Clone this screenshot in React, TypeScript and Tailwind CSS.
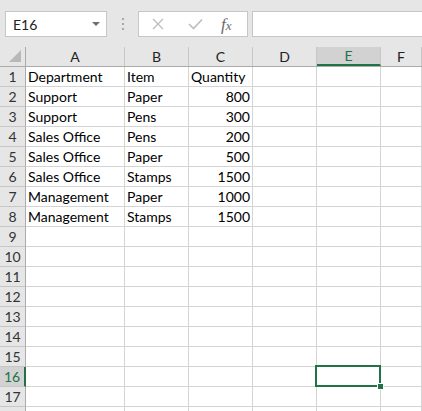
import React from 'react';

const cols = [
  { key: 'A', w: 'w-[99px]' },
  { key: 'B', w: 'w-[64px]' },
  { key: 'C', w: 'w-[64px]' },
  { key: 'D', w: 'w-[64px]' },
  { key: 'E', w: 'w-[64px]' },
  { key: 'F', w: 'flex-1' },
];

const data: (string | number)[][] = [
  ['Department', 'Item', 'Quantity'],
  ['Support', 'Paper', 800],
  ['Support', 'Pens', 300],
  ['Sales Office', 'Pens', 200],
  ['Sales Office', 'Paper', 500],
  ['Sales Office', 'Stamps', 1500],
  ['Management', 'Paper', 1000],
  ['Management', 'Stamps', 1500],
];

function FormulaBar() {
  return (
    <div className="h-[47px] flex items-start pt-[11px] pl-[5px] bg-[#e6e6e6]">
      <div className="w-[102px] h-[26px] bg-white border border-[#c6c6c6] flex items-center pl-[7px] pr-[6px]">
        <span className="flex-1 text-[14px] text-[#222]">E16</span>
        <svg width="8" height="5" viewBox="0 0 8 5">
          <path d="M0 0 L8 0 L4 4 Z" fill="#6f6f6f" />
        </svg>
      </div>
      <div className="w-[31px] h-[26px] flex flex-col items-center justify-center gap-[3px]">
        <div className="w-[2px] h-[2px] bg-[#a8a8a8]" />
        <div className="w-[2px] h-[2px] bg-[#a8a8a8]" />
        <div className="w-[2px] h-[2px] bg-[#a8a8a8]" />
      </div>
      <div className="w-[110px] h-[26px] bg-white border border-[#c6c6c6] flex items-center">
        <svg className="ml-[13px]" width="12" height="12" viewBox="0 0 12 12">
          <path d="M1 1 L11 11 M11 1 L1 11" stroke="#bdbdbd" strokeWidth="1.3" />
        </svg>
        <svg className="ml-[24px]" width="15" height="12" viewBox="0 0 15 12">
          <path d="M1 6 L5.5 10.5 L14 1.5" stroke="#bdbdbd" strokeWidth="1.6" fill="none" />
        </svg>
        <span className="ml-[18px] text-[17px] leading-none italic text-[#6a6a6a] font-['Liberation_Serif',serif]">
          f<span className="text-[13px]">x</span>
        </span>
      </div>
      <div className="ml-[4px] flex-1 h-[26px] bg-white border border-[#c6c6c6] border-r-0" />
    </div>
  );
}

function HeaderRow() {
  return (
    <div className="flex h-[20px] bg-[#e6e6e6] border-b border-[#ababab]">
      <div className="w-[26px] h-full border-r border-[#ababab] flex items-end justify-end pr-[4px] pb-[4px]">
        <svg width="12" height="12" viewBox="0 0 12 12">
          <path d="M12 0 L12 12 L0 12 Z" fill="#b8b8b8" />
        </svg>
      </div>
      {cols.map((c) => {
        const sel = c.key === 'E';
        return (
          <div
            key={c.key}
            className={
              c.w +
              ' h-full border-r border-[#c6c6c6] flex items-center justify-center text-[14px] ' +
              (sel ? 'bg-[#d2d2d2] text-[#217346] border-b-2 border-b-[#217346]' : 'text-[#222]')
            }
          >
            {c.key}
          </div>
        );
      })}
    </div>
  );
}

function Row({ n }: { n: number }) {
  const vals = data[n - 1] ?? [];
  const sel = n === 16;
  return (
    <div className="flex h-[20px]">
      <div
        className={
          'w-[26px] h-full border-b border-[#c6c6c6] flex items-end justify-center pb-[1px] text-[14px] leading-[16px] ' +
          (sel
            ? 'bg-[#d2d2d2] text-[#217346] border-r-2 border-r-[#217346]'
            : 'bg-[#e6e6e6] text-[#333] border-r border-r-[#ababab]')
        }
      >
        {n}
      </div>
      {cols.map((c, i) => {
        const v = vals[i];
        const num = typeof v === 'number';
        return (
          <div
            key={c.key}
            className={
              c.w +
              ' h-full border-r border-b border-[#d4d4d4] flex items-end pb-[1px] px-[2px] text-[14px] leading-[16px] text-black whitespace-nowrap ' +
              (num ? 'justify-end' : 'justify-start')
            }
          >
            {v !== undefined ? String(v) : ''}
          </div>
        );
      })}
    </div>
  );
}

export default function App() {
  const rows = Array.from({ length: 18 }, (_, i) => i + 1);
  return (
    <div className="w-[422px] h-[411px] overflow-hidden bg-white font-['Lato','Liberation_Sans',sans-serif] relative">
      <FormulaBar />
      <HeaderRow />
      <div className="flex flex-col">
        {rows.map((n) => (
          <Row key={n} n={n} />
        ))}
      </div>
      {/* active cell E16 */}
      <div className="absolute left-[315px] top-[365px] w-[66px] h-[22px] border-2 border-[#217346]" />
      <div className="absolute left-[377px] top-[383px] w-[7px] h-[7px] bg-[#217346] border border-white" />
    </div>
  );
}
